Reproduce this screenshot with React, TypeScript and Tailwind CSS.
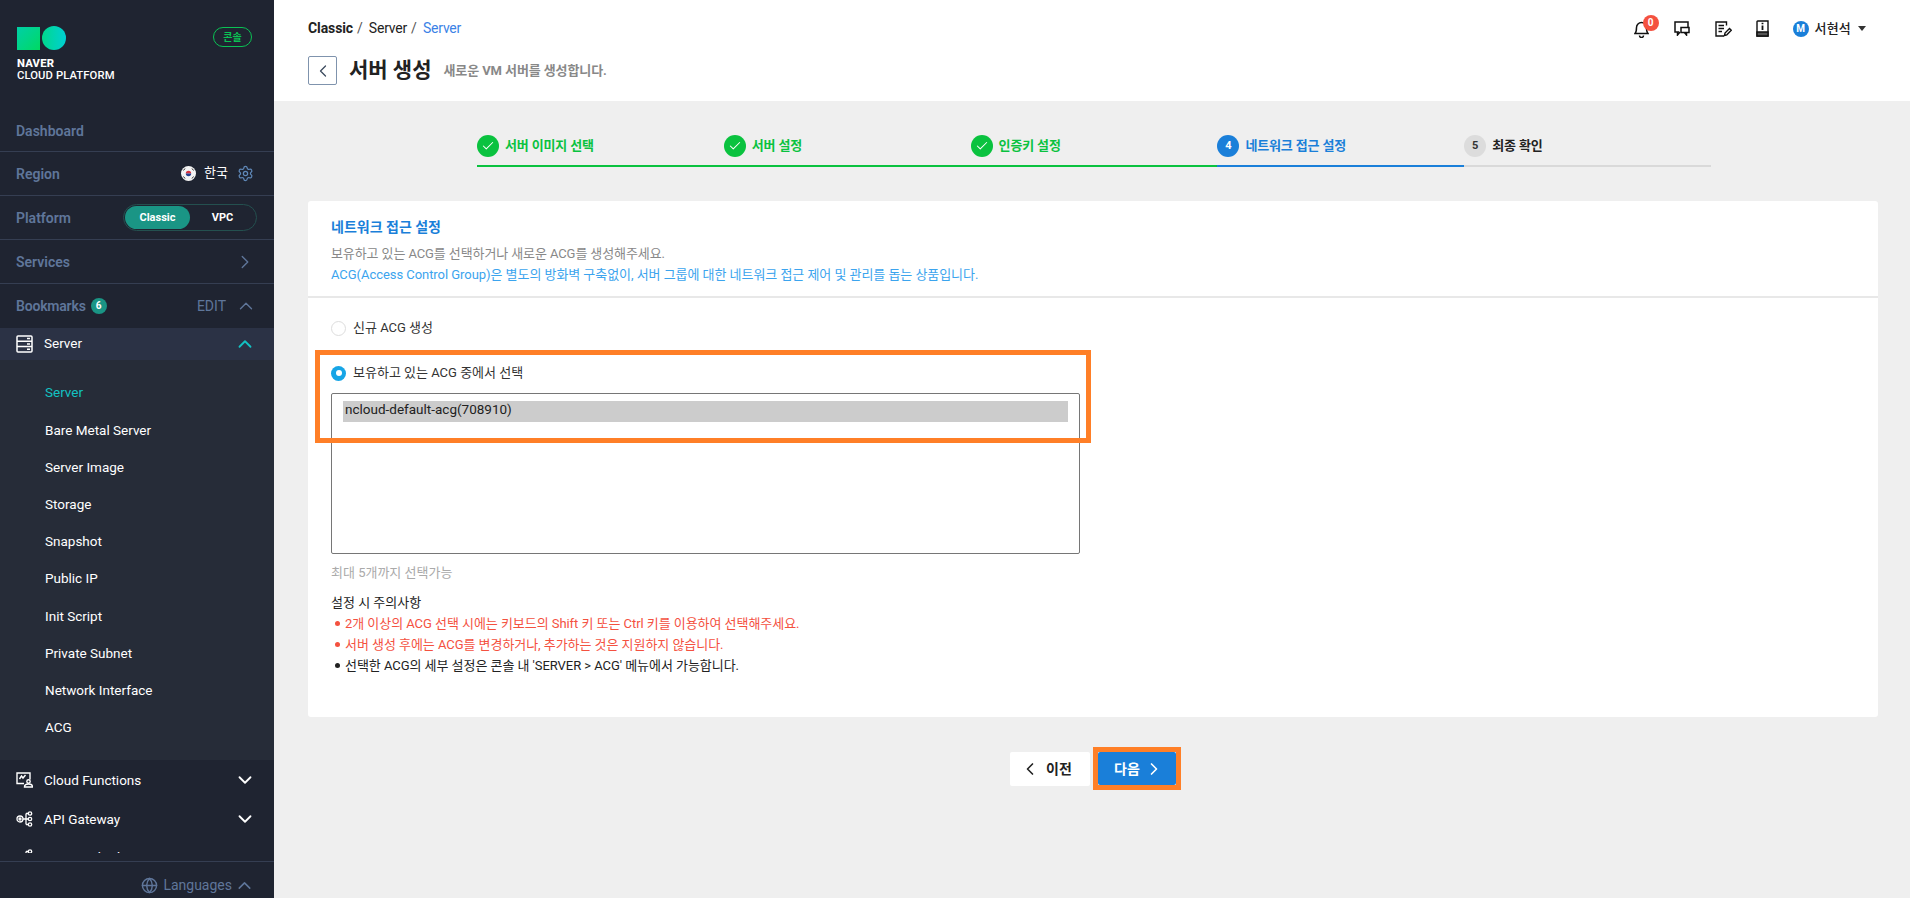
import { ChevronDown, ChevronLeft, ChevronRight, ChevronUp, Check, Globe, Settings } from 'lucide-react';

const subItems = ['Server', 'Bare Metal Server', 'Server Image', 'Storage', 'Snapshot', 'Public IP', 'Init Script', 'Private Subnet', 'Network Interface', 'ACG'];

const FONT = "font-['Roboto','Noto_Sans_CJK_KR',sans-serif]";

const ServerIcon = () => (
  <svg width="17" height="18" viewBox="0 0 17 18" fill="none" stroke="#fff" strokeWidth="1.5">
    <rect x="1" y="1" width="15" height="16" rx="1" />
    <path d="M1 6.3h15M1 11.6h15M11 3.6h3M11 9h3M11 14.3h3" />
  </svg>
);

const FunctionIcon = () => (
  <svg width="17" height="16" viewBox="0 0 17 16" fill="none" stroke="#fff" strokeWidth="1.4">
    <path d="M8 11.500H1V1h13v6.500" />
    <path d="M3.500 7l2-3 1.500 2 2.500-3" />
    <path d="M8.500 15c0-2 1.800-3 4-3s4 1 4 3z" />
    <circle cx="12.500" cy="9.500" r="1.700" />
  </svg>
);

const GatewayIcon = () => (
  <svg width="17" height="16" viewBox="0 0 17 16" fill="none" stroke="#fff" strokeWidth="1.3">
    <circle cx="4" cy="8" r="3" />
    <circle cx="4" cy="8" r="1" />
    <circle cx="14" cy="2.500" r="1.700" />
    <circle cx="14" cy="8" r="1.700" />
    <circle cx="14" cy="13.500" r="1.700" />
    <path d="M7 8h5M10 2.500h2.300M10 13.500h2.300M10 2.500v11" />
  </svg>
);

const FlagIcon = () => (
  <svg width="15" height="15" viewBox="0 0 15 15">
    <circle cx="7.500" cy="7.500" r="7.500" fill="#f4f4f4" />
    <path d="M4.800 7.500a2.700 2.700 0 0 1 5.400 0z" fill="#d8343f" />
    <path d="M4.800 7.500a2.700 2.700 0 0 0 5.400 0z" fill="#27408f" />
    <path d="M2.500 4.500l1.500-2M11 2.500l1.500 2M2.500 10.500l1.500 2M11 12.500l1.500-2" stroke="#333" strokeWidth="1" />
  </svg>
);

const SidebarRow = ({ label, right }: { label: React.ReactNode; right?: React.ReactNode }) => (
  <div className="flex h-[44px] shrink-0 items-center justify-between border-b border-[#353e52] pl-4 pr-[20px] text-sm font-semibold text-[#5f769a]">
    <div className="flex items-center">{label}</div>
    {right}
  </div>
);

const Sidebar = () => (
  <aside className="flex h-full w-[274px] shrink-0 flex-col bg-[#1f2431]">
    <div className="flex h-[108px] shrink-0 items-start justify-between pl-[17px] pr-[22px] pt-[26px]">
      <div>
        <div className="flex items-center gap-[2px]">
          <div className="h-[23px] w-[23px] bg-gradient-to-br from-[#00cfa6] to-[#00d95f]" />
          <div className="h-[24px] w-[24px] rounded-full bg-gradient-to-r from-[#00d88a] to-[#00cfd2]" />
        </div>
        <div className="mt-[8px] text-[11.250px] font-extrabold leading-[12px] tracking-[0.2px] text-white">NAVER</div>
        <div className="text-[11.250px] font-medium leading-[12px] tracking-[0.1px] text-white">CLOUD PLATFORM</div>
      </div>
      <div className="mt-px flex h-[20px] w-[39px] items-center justify-center rounded-full border border-[#0ac254] text-[10px] font-bold text-[#0ac254]">콘솔</div>
    </div>
    <SidebarRow label={<span className="translate-y-px">Dashboard</span>} />
    <SidebarRow
      label="Region"
      right={
        <div className="flex items-center">
          <FlagIcon />
          <span className="ml-2 text-[13px] font-normal text-white">한국</span>
          <Settings size={17} strokeWidth={1.75} className="ml-[9px] text-[#5f88b8]" />
        </div>
      }
    />
    <SidebarRow
      label="Platform"
      right={
        <div className="-mr-[3px] flex h-[27px] w-[134px] items-center rounded-full border border-[#24504f] p-px text-[11px] font-bold text-white">
          <div className="flex h-[23px] w-[65px] items-center justify-center rounded-full bg-[#1a9585]">Classic</div>
          <div className="flex-1 text-center">VPC</div>
        </div>
      }
    />
    <SidebarRow label="Services" right={<ChevronRight size={22} strokeWidth={1.5} className="-mr-[2px] text-[#5f769a]" />} />
    <div className="flex h-[44px] shrink-0 items-center justify-between pl-4 pr-[17px] text-sm text-[#5f769a]">
      <div className="flex items-center font-semibold tracking-[-0.2px]">
        Bookmarks
        <span className="ml-[5px] flex h-4 w-4 items-center justify-center rounded-full bg-[#1a9585] text-[10px] font-bold tracking-normal text-white">6</span>
      </div>
      <div className="flex items-center gap-[9px]">
        <span>EDIT</span>
        <ChevronUp size={22} strokeWidth={1.5} />
      </div>
    </div>
    <div className="min-h-0 flex-1 overflow-hidden">
      <div className="flex h-[32px] items-center justify-between bg-[#2b3245] pl-4 pr-[18px] text-[13.500px] text-white">
        <div className="-mt-px flex items-center gap-[11px]">
          <ServerIcon />
          Server
        </div>
        <ChevronUp size={22} strokeWidth={2} className="text-[#13c2c2]" />
      </div>
      <div className="flex flex-col bg-[#262c38] pb-[14px] pl-[45px] pt-[14px] text-[13.500px] text-white">
        {subItems.map((item, i) => (
          <div key={item} className={`flex h-[37.200px] items-center ${i === 0 ? 'text-[#13c2c2]' : ''}`}>
            {item}
          </div>
        ))}
      </div>
      <div className="pt-px">
        {[
          { label: 'Cloud Functions', icon: <FunctionIcon /> },
          { label: 'API Gateway', icon: <GatewayIcon /> },
          { label: 'CLOVA Chatbot', icon: <GatewayIcon /> },
        ].map((row) => (
          <div key={row.label} className="flex h-[38.500px] items-center justify-between pl-4 pr-[18px] text-[13.500px] text-white">
            <div className="flex items-center gap-[11px]">
              {row.icon}
              {row.label}
            </div>
            <ChevronDown size={22} strokeWidth={2} />
          </div>
        ))}
      </div>
    </div>
    <div className="mt-2 flex h-[37px] shrink-0 items-center justify-end gap-[5px] border-t border-[#353e52] pr-[19px] pt-[10px] text-sm text-[#5f769a]">
      <Globe size={17} />
      <span>Languages</span>
      <ChevronUp size={21} strokeWidth={1.75} className="-ml-[3px]" />
    </div>
  </aside>
);

const Header = () => (
  <header className="relative h-[101px] shrink-0 bg-white pl-[34px]">
    <div className="flex items-center pt-[19px] text-sm leading-[18px] text-[#222]">
      <span className="font-bold tracking-[-0.1px]">Classic</span>
      <span className="ml-1 text-[#555]">/</span>
      <span className="ml-[6px] tracking-[-0.2px]">Server</span>
      <span className="ml-1 text-[#555]">/</span>
      <span className="ml-[6px] tracking-[-0.2px] text-[#3b82e6]">Server</span>
    </div>
    <div className="mt-[18px] flex items-center">
      <div className="flex h-[29px] w-[29px] items-center justify-center rounded-[2px] border border-[#7f93ad]">
        <ChevronLeft size={20} strokeWidth={1.5} className="text-[#3b4a5e]" />
      </div>
      <h1 className="ml-3 text-[21px] font-bold text-[#222]">서버 생성</h1>
      <span className="ml-3 text-[13px] font-bold tracking-[-0.1px] text-[#888]">새로운 VM 서버를 생성합니다.</span>
    </div>
    <div className="absolute right-[44px] top-[19px] flex items-center text-[#222]">
      <div className="relative mr-[25px] flex h-[16px] w-[15px] justify-center">
        <svg width="15" height="17" viewBox="0 0 15 17" fill="none" stroke="#111" strokeWidth="1.500">
          <path d="M1 12.500c1.500-1.500 1.500-3 1.500-6a5 5 0 0 1 10 0c0 3 0 4.500 1.500 6z" />
          <path d="M5.500 14.500a2 2 0 0 0 4 0" />
        </svg>
        <span className="absolute -top-[6px] left-[9px] flex h-4 w-4 items-center justify-center rounded-full bg-[#f4513f] text-[10px] font-bold text-white">0</span>
      </div>
      <svg className="mr-[25px]" width="16" height="15" viewBox="0 0 16 15" fill="none" stroke="#111" strokeWidth="1.500">
        <path d="M5 11H1V1h13v5" />
        <path d="M3.500 11v3l2.500-3" />
        <rect x="7" y="6.500" width="8" height="5" fill="#fff" />
        <path d="M12.500 11.500V14l-2-2.500" />
      </svg>
      <svg className="mr-[24px]" width="17" height="16" viewBox="0 0 17 16" fill="none" stroke="#111" strokeWidth="1.400">
        <path d="M11.500 4.500V1H1v14h8" />
        <path d="M3.500 4.500h5.500M3.500 7.500h5.500M3.500 10.500h3.500" />
        <path d="M9.500 14.500l.5-2.500 4.500-4.500 1.800 1.800-4.500 4.500z" />
      </svg>
      <svg className="mr-[24px]" width="13" height="17" viewBox="0 0 13 17" fill="none" stroke="#111" strokeWidth="1.400">
        <path d="M1 16V1.700A.7.700 0 0 1 1.700 1H12v15z" />
        <path d="M1 12h11v4H1z" fill="#555" />
        <path d="M6.500 5.500V10M6.500 2.800v1.400" strokeWidth="1.800" />
      </svg>
      <span className="flex h-[16px] w-[16px] items-center justify-center rounded-full bg-[#1a7fd9] text-[10px] font-bold text-white">M</span>
      <span className="ml-[6px] text-[13px] font-medium tracking-[0.2px]">서현석</span>
      <span className="ml-[7px] h-0 w-0 border-x-[4px] border-t-[5px] border-x-transparent border-t-[#333]" />
    </div>
  </header>
);

const steps = [
  { n: 1, label: '서버 이미지 선택', state: 'done' },
  { n: 2, label: '서버 설정', state: 'done' },
  { n: 3, label: '인증키 설정', state: 'done' },
  { n: 4, label: '네트워크 접근 설정', state: 'active' },
  { n: 5, label: '최종 확인', state: 'todo' },
];

const Steps = () => (
  <div className="ml-[203px] flex w-[1234px] pt-[34px]">
    {steps.map((s) => (
      <div
        key={s.n}
        className={`flex h-[32px] w-[246.800px] items-start gap-[6px] border-b-2 text-[13px] font-bold tracking-[-0.15px] ${
          s.state === 'done'
            ? 'border-[#0ac23f] text-[#0ac23f]'
            : s.state === 'active'
              ? 'border-[#1a7fd9] text-[#1a7fd9]'
              : 'border-[#d9d9d9] text-[#222]'
        }`}
      >
        {s.state === 'done' ? (
          <span className="flex h-[22px] w-[22px] items-center justify-center rounded-full bg-[#0ac23f] text-white">
            <Check size={14} strokeWidth={1.75} />
          </span>
        ) : (
          <span
            className={`flex h-[22px] w-[22px] items-center justify-center rounded-full text-[11px] ${
              s.state === 'active' ? 'bg-[#1a7fd9] text-white' : 'bg-[#dcdcdc] text-[#333]'
            }`}
          >
            {s.n}
          </span>
        )}
        <span className="leading-[22px]">{s.label}</span>
      </div>
    ))}
  </div>
);

const Card = () => (
  <section className="relative ml-[34px] mr-[32px] mt-[34px] h-[516px] rounded-[3px] bg-white">
    <div className="h-[97px] border-b-2 border-[#e8e8e8] pl-[23px] pt-[16px]">
      <h2 className="text-sm font-bold leading-[20px] text-[#1a7fd9]">네트워크 접근 설정</h2>
      <p className="mt-[6px] text-[13px] leading-[21px] tracking-[-0.1px] text-[#888]">보유하고 있는 ACG를 선택하거나 새로운 ACG를 생성해주세요.</p>
      <p className="text-[13px] leading-[21px] tracking-[-0.05px] text-[#3ba4ee]">ACG(Access Control Group)은 별도의 방화벽 구축없이, 서버 그룹에 대한 네트워크 접근 제어 및 관리를 돕는 상품입니다.</p>
    </div>
    <div className="pl-[23px] pt-[22px]">
      <label className="flex h-[16px] items-center gap-[7px] text-[13px] text-[#333]">
        <span className="h-[15px] w-[15px] rounded-full border border-[#ddd] bg-white" />
        신규 ACG 생성
      </label>
      <label className="mt-[29px] flex h-[16px] items-center gap-[7px] text-[13px] text-[#333]">
        <span className="flex h-[15px] w-[15px] items-center justify-center rounded-full bg-[#17a5e6]">
          <span className="h-[6px] w-[6px] rounded-full bg-white" />
        </span>
        보유하고 있는 ACG 중에서 선택
      </label>
      <div className="mt-[12px] h-[161px] w-[749px] rounded-[2px] border border-[#767676] px-[11px] pt-[7px]">
        <div className="h-[21px] bg-[#cccccc] pl-[2px] text-[13.500px] leading-[16px] text-[#222]">ncloud-default-acg(708910)</div>
      </div>
      <p className="mt-[10px] text-[13px] leading-[18px] text-[#aaa]">최대 5개까지 선택가능</p>
      <p className="mt-[12px] text-[13px] leading-[18px] text-[#222]">설정 시 주의사항</p>
      <ul className="mt-px text-[13px] leading-[21px] tracking-[-0.05px]">
        {[
          { text: "2개 이상의 ACG 선택 시에는 키보드의 Shift 키 또는 Ctrl 키를 이용하여 선택해주세요.", red: true },
          { text: "서버 생성 후에는 ACG를 변경하거나, 추가하는 것은 지원하지 않습니다.", red: true },
          { text: "선택한 ACG의 세부 설정은 콘솔 내 'SERVER > ACG' 메뉴에서 가능합니다.", red: false },
        ].map((line) => (
          <li key={line.text} className={`flex items-center pl-[4px] ${line.red ? 'text-[#f4513f]' : 'text-[#222]'}`}>
            <span className={`mr-[5px] h-[5px] w-[5px] rounded-full ${line.red ? 'bg-[#f4513f]' : 'bg-[#222]'}`} />
            {line.text}
          </li>
        ))}
      </ul>
    </div>
    {/* highlight drawn over the screenshot */}
    <div className="pointer-events-none absolute left-[7px] top-[149px] h-[93px] w-[776px] border-[5px] border-[#ff7f27]" />
  </section>
);

const Footer = () => (
  <div className="ml-[736px] mt-[30px] flex items-center">
    <button className="flex h-[34px] w-[80px] items-center justify-start gap-[6px] rounded-[2px] bg-white pl-[10px] text-sm font-bold text-[#222]">
      <ChevronLeft size={20} strokeWidth={2} />
      이전
    </button>
    <div className="ml-[3px] border-[5px] border-[#ff7f27]">
      <button className="flex h-[33px] w-[78px] items-center justify-start gap-[4px] rounded-[2px] bg-[#1a7fd9] pl-[16px] text-sm font-bold text-white">
        다음
        <ChevronRight size={20} strokeWidth={2} />
      </button>
    </div>
  </div>
);

export default function App() {
  return (
    <div className={`flex h-screen w-full overflow-hidden bg-[#efefef] ${FONT}`}>
      <Sidebar />
      <main className="flex min-w-0 flex-1 flex-col">
        <Header />
        <Steps />
        <Card />
        <Footer />
      </main>
    </div>
  );
}
